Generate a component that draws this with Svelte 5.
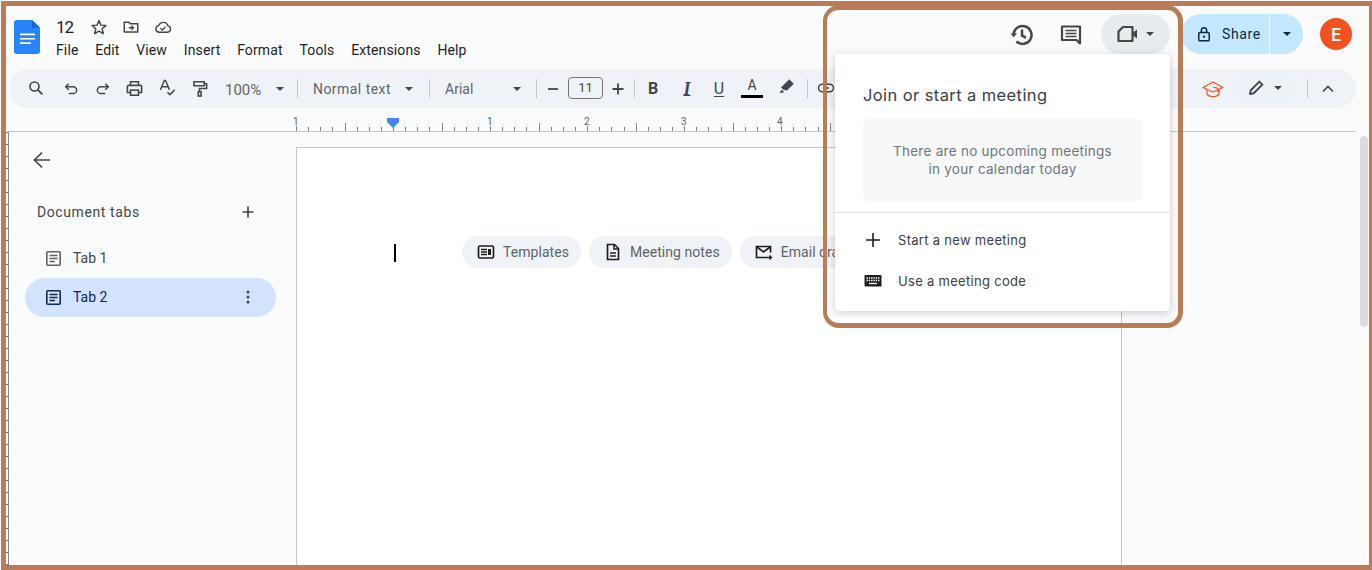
<script>
  const menus = ['File','Edit','View','Insert','Format','Tools','Extensions','Help'];
  const hTicks = Array.from({length: 70}, (_, i) => i);
  const vTicks = Array.from({length: 60}, (_, i) => i);
</script>

<div class="app">
  <header class="top">
    <svg class="logo" width="26" height="34" viewBox="0 0 26 35" preserveAspectRatio="none"><path d="M3 0h15l8 8v24a3 3 0 0 1-3 3H3a3 3 0 0 1-3-3V3a3 3 0 0 1 3-3z" fill="#2684fc"/><path d="M18 0l8 8h-8z" fill="#1a66d6"/><path d="M6 14h15v1.600H6zM6 18.500h15v1.600H6zM6 23h11v1.600H6z" fill="#fff"/></svg>
    <div class="titles">
      <div class="titlerow">
        <span class="docname">12</span>
        <svg class="ic" width="18" height="18" viewBox="0 0 24 24"><path d="M12 3.500l2.600 6 6.500.6-4.900 4.300 1.500 6.400L12 17.400l-5.700 3.400 1.500-6.400-4.900-4.300 6.500-.6z" fill="none" stroke="#444746" stroke-width="2" stroke-linejoin="round"/></svg>
        <svg class="ic folder" width="18" height="18" viewBox="0 0 24 24"><path d="M3 5.500h6l2 2.200h10v11H3z" fill="none" stroke="#444746" stroke-width="2" stroke-linejoin="round"/><path d="M9 13h6M12.500 10.300l2.700 2.700-2.700 2.700" fill="none" stroke="#444746" stroke-width="1.800"/></svg>
        <svg class="ic" width="20" height="18" viewBox="0 0 24 24"><path d="M7 19a4.600 4.600 0 0 1-.8-9.100A6.500 6.500 0 0 1 18.500 10.500a4.300 4.300 0 0 1-.3 8.500z" fill="none" stroke="#444746" stroke-width="1.800"/><path d="M8.500 13.500l2.500 2.500 4.500-4.500" fill="none" stroke="#444746" stroke-width="1.800"/></svg>
      </div>
      <nav class="menus">
        {#each menus as m}<span>{m}</span>{/each}
      </nav>
    </div>
    <div class="actions">
      <svg class="hist" width="26" height="26" viewBox="0 0 24 24"><path d="M4.200 12a8.300 8.300 0 1 1 2.600 6" fill="none" stroke="#444746" stroke-width="2.300"/><path d="M1.300 10.500h6l-3 3.500z" fill="#444746"/><path d="M12 7v5.400l3.600 2.200" fill="none" stroke="#444746" stroke-width="2.300"/></svg>
      <svg class="cmt" width="24" height="24" viewBox="0 0 24 24"><path d="M3 3.500h18v17l-3.500-3.500H3z" fill="none" stroke="#444746" stroke-width="2.200" stroke-linejoin="round"/><path d="M6.500 7.500h11M6.500 10.500h11M6.500 13.500h11" stroke="#444746" stroke-width="1.700"/></svg>
      <div class="meet">
        <svg width="24" height="24" viewBox="0 0 24 24"><path d="M8 5h9.500v14H3.500V9.500z" fill="none" stroke="#444746" stroke-width="2.200" stroke-linejoin="round"/><path d="M18 10.500L22 7.500v9l-4-3z" fill="#444746"/></svg>
        <i class="caret"></i>
      </div>
      <div class="share">
        <div class="sharemain">
          <svg width="18" height="18" viewBox="0 0 24 24"><rect x="5" y="10" width="14" height="11" rx="1.500" fill="none" stroke="#0b2a46" stroke-width="2"/><path d="M8.500 10V7a3.500 3.500 0 0 1 7 0v3" fill="none" stroke="#0b2a46" stroke-width="2"/><circle cx="12" cy="15.500" r="1.500" fill="#0b2a46"/></svg>
          <span>Share</span>
        </div>
        <div class="sharedrop"><i class="caret dark"></i></div>
      </div>
      <div class="avatar">E</div>
    </div>
  </header>

  <div class="toolbar">
    <svg class="tb first" width="18" height="18" viewBox="0 0 24 24"><circle cx="10" cy="10" r="6" fill="none" stroke="#444746" stroke-width="2.200"/><path d="M14.500 14.500l6 6" stroke="#444746" stroke-width="2.400"/></svg>
    <svg class="tb undo" width="18" height="18" viewBox="0 0 24 24"><path d="M5 9h10a4.500 4.500 0 0 1 0 9H9" fill="none" stroke="#444746" stroke-width="2"/><path d="M9 5L5 9l4 4" fill="none" stroke="#444746" stroke-width="2"/></svg>
    <svg class="tb redo" width="18" height="18" viewBox="0 0 24 24"><path d="M19 9H9a4.500 4.500 0 0 0 0 9h6" fill="none" stroke="#444746" stroke-width="2"/><path d="M15 5l4 4-4 4" fill="none" stroke="#444746" stroke-width="2"/></svg>
    <svg class="tb print" width="19" height="19" viewBox="0 0 24 24"><path d="M7 8V3.500h10V8M7 17H3V9.500a1.500 1.500 0 0 1 1.500-1.500h15A1.500 1.500 0 0 1 21 9.500V17h-4" fill="none" stroke="#444746" stroke-width="2"/><rect x="7" y="14" width="10" height="6.500" fill="none" stroke="#444746" stroke-width="2"/></svg>
    <svg class="tb spell" width="19" height="19" viewBox="0 0 24 24"><path d="M3 15L8 3h1.500l5 12M5 11h7.500" fill="none" stroke="#444746" stroke-width="1.800"/><path d="M12 18l3 3 6-6" fill="none" stroke="#444746" stroke-width="1.800"/></svg>
    <svg class="tb paint" width="19" height="19" viewBox="0 0 24 24"><path d="M5 3.500h13v5H5zM18 6h3v6h-9v3" fill="none" stroke="#444746" stroke-width="2"/><rect x="10.500" y="16" width="3.500" height="5.500" fill="none" stroke="#444746" stroke-width="2"/></svg>
    <span class="zoomv">100%</span><i class="caret c1"></i>
    <b class="sep s1"></b>
    <span class="style">Normal text</span><i class="caret c2"></i>
    <b class="sep s2"></b>
    <span class="font">Arial</span><i class="caret c3"></i>
    <b class="sep s3"></b>
    <svg class="tb minus" width="12" height="12" viewBox="0 0 12 12"><path d="M1 6h10" stroke="#444746" stroke-width="1.800"/></svg>
    <span class="fsize">11</span>
    <svg class="tb plus" width="12" height="12" viewBox="0 0 12 12"><path d="M0.500 6h11M6 .5v11" stroke="#444746" stroke-width="1.800"/></svg>
    <b class="sep s4"></b>
    <span class="fmt bold">B</span>
    <span class="fmt ital">I</span>
    <span class="fmt und">U</span>
    <span class="fmt col">A</span>
    <svg class="tb hl" width="18" height="18" viewBox="0 0 24 24"><path d="M15 3l6 6-9 9-5-1-2-2-1-1z" fill="#444746"/><path d="M2 21l3-4 3 3-1.500 1z" fill="#444746"/></svg>
    <b class="sep s5"></b>
    <svg class="tb link" width="18" height="18" viewBox="0 0 24 24"><path d="M11 7H7a5 5 0 0 0 0 10h4M13 7h4a5 5 0 0 1 0 10h-4M8 12h8" fill="none" stroke="#444746" stroke-width="2"/></svg>
    <svg class="cap" width="24" height="24" viewBox="0 0 24 24"><path d="M12 5L2 10.500 12 15l10-4.500z" fill="none" stroke="#f4511e" stroke-width="1.200" stroke-linejoin="round"/><path d="M6 13v4.500c3 3 9 3 12 0V13M12 10l5 1.500V15" fill="none" stroke="#f4511e" stroke-width="1.200"/></svg>
    <div class="editmode">
      <svg width="18" height="18" viewBox="0 0 24 24"><path d="M4 20l1-5L16.500 3.500l4 4L9 19z" fill="none" stroke="#444746" stroke-width="2.600" stroke-linejoin="round"/></svg>
      <i class="caret"></i>
    </div>
    <b class="sep s6"></b>
    <svg class="chev" width="16" height="16" viewBox="0 0 16 16"><path d="M3 10.500L8 5.500l5 5" fill="none" stroke="#444746" stroke-width="1.700"/></svg>
  </div>

  <div class="hruler">
    {#each hTicks as i}
      <i class="tick" class:mid={i % 8 === 4} class:inch={i % 8 === 0} style="left:{296 + i * 12.13}px"></i>
    {/each}
    <b class="hl-num n1">1</b><b class="hl-num n2">1</b><b class="hl-num n3">2</b><b class="hl-num n4">3</b><b class="hl-num n5">4</b>
    <div class="marker"></div>
    <div class="rulerline"></div>
  </div>

  <div class="main">
    <div class="vruler">
      {#each vTicks as i}<i style="top:{i * 12}px"></i>{/each}
    </div>
    <aside class="side">
      <svg class="back" width="20" height="20" viewBox="0 0 20 20"><path d="M18 10H3M10 2.500L2.500 10l7.500 7.500" fill="none" stroke="#444746" stroke-width="1.700"/></svg>
      <div class="dochead"><span>Document tabs</span>
        <svg width="12" height="12" viewBox="0 0 12 12"><path d="M0.500 6h11M6 .5v11" stroke="#444746" stroke-width="1.700"/></svg>
      </div>
      <div class="tabrow">
        <svg width="15" height="15" viewBox="0 0 15 15"><rect x=".8" y=".8" width="13.400" height="13.400" rx="1" fill="none" stroke="#5f6368" stroke-width="1.600"/><path d="M3.500 4.500h8M3.500 7.500h8M3.500 10.500h5.500" stroke="#5f6368" stroke-width="1.300"/></svg>
        <span>Tab 1</span>
      </div>
      <div class="tabrow active">
        <svg width="15" height="15" viewBox="0 0 15 15"><rect x=".8" y=".8" width="13.400" height="13.400" rx="1" fill="none" stroke="#0b2a5c" stroke-width="1.600"/><path d="M3.500 4.500h8M3.500 7.500h8M3.500 10.500h5.500" stroke="#0b2a5c" stroke-width="1.300"/></svg>
        <span>Tab 2</span>
        <svg class="dots" width="4" height="14" viewBox="0 0 4 14"><circle cx="2" cy="2" r="1.500" fill="#444746"/><circle cx="2" cy="7" r="1.500" fill="#444746"/><circle cx="2" cy="12" r="1.500" fill="#444746"/></svg>
      </div>
    </aside>
    <section class="page">
      <div class="cursor"></div>
      <div class="chips">
        <div class="chip">
          <svg width="18" height="18" viewBox="0 0 18 18"><rect x="1.500" y="3" width="15" height="12" rx="1.500" fill="none" stroke="#1f1f1f" stroke-width="1.700"/><path d="M4 6.500h6M4 9h6M4 11.500h6" stroke="#1f1f1f" stroke-width="1.300"/><rect x="11" y="6" width="3" height="6" fill="#1f1f1f"/></svg>
          <span>Templates</span>
        </div>
        <div class="chip">
          <svg width="18" height="18" viewBox="0 0 18 18"><path d="M3.500 1.500h7l4 4v11h-11z" fill="none" stroke="#1f1f1f" stroke-width="1.700"/><path d="M10 1.500v4.500h4.500M6 10h6M6 13h6" fill="none" stroke="#1f1f1f" stroke-width="1.500"/></svg>
          <span>Meeting notes</span>
        </div>
        <div class="chip">
          <svg width="18" height="18" viewBox="0 0 18 18"><path d="M11 14.500H1.500v-11h14v6" fill="none" stroke="#1f1f1f" stroke-width="1.700"/><path d="M2 4l6.500 5L15 4" fill="none" stroke="#1f1f1f" stroke-width="1.700"/><path d="M11 14.500h5.500M14.500 12.500l2 2-2 2" fill="none" stroke="#1f1f1f" stroke-width="1.300"/></svg>
          <span>Email draft</span>
        </div>
      </div>
    </section>
    <div class="gutter"><div class="scrollthumb"></div></div>
  </div>

  <div class="popover">
    <h2>Join or start a meeting</h2>
    <div class="empty">There are no upcoming meetings<br />in your calendar today</div>
    <hr />
    <div class="item">
      <svg width="20" height="20" viewBox="0 0 20 20"><path d="M3 10h14M10 3v14" stroke="#1f1f1f" stroke-width="1.600"/></svg>
      <span>Start a new meeting</span>
    </div>
    <div class="item">
      <svg width="20" height="20" viewBox="0 0 20 20"><rect x="1.500" y="4" width="17" height="11.500" rx="1" fill="#1f1f1f"/><path d="M3.500 7h13M3.500 9.500h13" stroke="#fff" stroke-width="1.300" stroke-dasharray="1.400 .9"/><path d="M6 12.500h8" stroke="#fff" stroke-width="1.300"/></svg>
      <span>Use a meeting code</span>
    </div>
  </div>

  <div class="frame"></div>
  <div class="callout"></div>
</div>

<style>
  :global(body) { margin: 0; }
  .app {
    position: relative;
    width: 1372px;
    height: 570px;
    overflow: hidden;
    background: #f9fbfd;
    font-family: Roboto, "Liberation Sans", sans-serif;
    color: #1f1f1f;
  }
  i, b { display: block; }

  .top { display: flex; height: 69px; box-sizing: border-box; padding: 20px 0 0 14px; }
  .logo { flex: none; }
  .titles { margin-left: 16px; margin-top: -4px; }
  .titlerow { display: flex; align-items: center; height: 22px; }
  .docname { font-size: 17px; letter-spacing: -1px; width: 34px; }
  .ic { margin-right: 14px; }
  .folder { margin-right: 13px; }
  .menus { display: flex; gap: 16.800px; margin-top: 2px; font-size: 14px; letter-spacing: .12px; line-height: 20px; color: #1f1f1f; }
  .actions { margin-left: auto; display: flex; align-items: flex-start; margin-top: -6px; }
  .hist { margin-top: 8px; margin-right: 24px; }
  .cmt { margin-top: 9px; margin-right: 18px; }
  .meet { width: 69px; height: 40px; margin-right: 11px; border-radius: 20px; background: #e9ecef; display: flex; align-items: center; justify-content: center; gap: 7px; padding-right: 3px; box-sizing: border-box; }
  .caret { width: 0; height: 0; border-left: 4.500px solid transparent; border-right: 4.500px solid transparent; border-top: 4.500px solid #444746; }
  .caret.dark { border-top-color: #0b2a46; }
  .share { display: flex; height: 40px; width: 122px; margin-right: 17px; border-radius: 20px; overflow: hidden; background: #c2e7ff; }
  .sharemain { width: 89px; box-sizing: border-box; padding-left: 14px; display: flex; align-items: center; gap: 9px; font-size: 14px; color: #0b2a46; letter-spacing: .6px; border-right: 1px solid #fff; }
  .sharedrop { flex: 1; display: flex; align-items: center; justify-content: center; }
  .avatar { width: 32px; height: 32px; margin-top: 4px; margin-right: 20px; border-radius: 50%; background: #f4511e; color: #fff; font-size: 18px; font-weight: 500; display: flex; align-items: center; justify-content: center; }

  .toolbar { position: relative; margin: 0 16px 0 9px; height: 39px; border-radius: 20px; background: #eff3f8; font-size: 14px; color: #444746; }
  .toolbar > * { position: absolute; }
  .tb { top: 10px; }
  .first { left: 18px; }
  .undo { left: 53px; top: 11px; }
  .redo { left: 85px; top: 11px; }
  .print { left: 116px; }
  .spell { left: 149px; top: 9px; }
  .paint { left: 181px; top: 10px; }
  .zoomv { left: 216px; top: 12px; font-size: 15px; color: #5f6368; }
  .c1 { left: 267px; top: 18px; }
  .c2 { left: 396px; top: 18px; }
  .c3 { left: 504px; top: 18px; }
  .sep { width: 1px; height: 19px; top: 10px; background: #c7c7c7; }
  .s1 { left: 288px; } .s2 { left: 420px; } .s3 { left: 527px; } .s4 { left: 625px; } .s5 { left: 798px; }
  .style { left: 304px; top: 12px; font-size: 14px; letter-spacing: .45px; color: #5f6368; }
  .font { left: 436px; top: 12px; font-size: 14px; color: #5f6368; }
  .minus { left: 538px; top: 14px; }
  .fsize { left: 559px; top: 8px; width: 35px; height: 22px; box-sizing: border-box; border: 1px solid #747775; border-radius: 4px; text-align: center; line-height: 20px; font-size: 13px; color: #444746; }
  .plus { left: 603px; top: 14px; }
  .fmt { top: 11px; width: 20px; text-align: center; font-size: 16px; line-height: 18px; color: #444746; }
  .bold { left: 634px; font-weight: 700; }
  .ital { left: 668px; font-family: "Liberation Serif", serif; font-style: italic; font-weight: 700; font-size: 18px; text-decoration: underline; text-decoration-thickness: 1px; text-underline-offset: 0; }
  .und { left: 700px; text-decoration: underline; text-underline-offset: 2px; }
  .col { left: 732px; width: 22px; height: 20px; top: 9px; box-sizing: border-box; border-bottom: 3px solid #000; line-height: 15px; font-size: 14px; }
  .hl { left: 769px; top: 8px; }
  .link { left: 808px; }
  .cap { right: 131px; top: 8px; }
  .editmode { right: 60px; top: 4px; width: 64px; height: 30px; border-radius: 15px; background: #edf1f8; display: flex; align-items: center; justify-content: center; gap: 9px; }
  .s6 { right: 48px; left: auto; }
  .chev { right: 20px; top: 12px; }

  .hruler { position: relative; height: 23px; }
  .tick { position: absolute; bottom: 0; width: 1px; height: 4px; background: #80868b; }
  .tick.mid { height: 8px; }
  .tick.inch { height: 5px; }
  .rulerline { position: absolute; left: 392px; right: 540px; bottom: -1px; height: 1px; background: #70757a; }
  .hl-num { position: absolute; top: 9px; font-size: 10px; font-weight: 400; color: #5f6368; line-height: 10px; }
  .n1 { left: 293px; } .n2 { left: 487px; } .n3 { left: 584px; } .n4 { left: 681px; } .n5 { left: 777px; }
  .marker { position: absolute; left: 387px; top: 10px; width: 12px; height: 4px; background: #4285f4; }
  .marker::after { content: ""; position: absolute; left: 0; top: 4px; border-left: 6px solid transparent; border-right: 6px solid transparent; border-top: 6px solid #4285f4; }

  .main { display: flex; height: 438px; border-top: 1px solid #c7c7c7; margin-left: 8px; margin-right: 16px; position: relative; }
  .vruler { position: absolute; left: -8px; top: 0; bottom: 0; width: 9px; border-right: 1px solid #80868b; box-sizing: border-box; }
  .vruler i { position: absolute; right: 0; width: 3px; height: 1px; background: #70757a; }
  .side { width: 288px; flex: none; box-sizing: border-box; padding: 18px 20px 0 18px; }
  .back { display: block; margin-left: 6px; }
  .dochead { display: flex; align-items: center; justify-content: space-between; width: 217px; margin-top: 32px; padding: 0 0 0 11px; font-size: 14px; letter-spacing: .6px; color: #444746; height: 20px; }
  .tabrow { display: flex; align-items: center; gap: 12px; width: 251px; height: 39px; box-sizing: border-box; padding: 0 21px 1px; margin-left: -1px; border-radius: 20px; font-size: 14px; color: #444746; }
  .dochead + .tabrow { margin-top: 17px; }
  .tabrow.active { background: #d3e3fd; color: #0b2a5c; }
  .dots { margin-left: auto; margin-right: 5px; }
  .page { position: relative; flex: none; width: 826px; margin-top: 15px; height: 500px; box-sizing: border-box; background: #fff; border: 1px solid #c7c7c7; border-bottom: 0; }
  .cursor { position: absolute; left: 97px; top: 96px; width: 2px; height: 18px; background: #000; }
  .chips { position: absolute; left: 165px; top: 88px; display: flex; gap: 8px; }
  .chip { display: flex; align-items: center; gap: 8px; height: 32px; padding: 0 12px 0 15px; border-radius: 16px; background: #eff3f8; font-size: 14px; letter-spacing: .05px; color: #5f6368; white-space: nowrap; }
  .gutter { position: relative; flex: 1; }
  .scrollthumb { position: absolute; right: -12px; top: 4px; width: 8px; height: 191px; border-radius: 4px; background: #dadce0; }

  .popover { position: absolute; left: 835px; top: 54px; width: 335px; height: 257px; box-sizing: border-box; background: #fff; border-radius: 4px; box-shadow: 0 2px 8px rgba(60,64,67,.25); padding-top: 30px; font-family: Inter, "Open Sans", sans-serif; }
  .popover h2 { margin: 0 0 0 28px; font-weight: 400; font-size: 16.500px; letter-spacing: .4px; line-height: 22px; color: #3c4043; }
  .empty { margin: 12px 28px 0; height: 84px; box-sizing: border-box; padding-top: 24px; border-radius: 8px; background: #f6f8fa; text-align: center; font-size: 13.500px; letter-spacing: .27px; line-height: 18px; color: #70757a; }
  .popover hr { margin: 10px 0 0; border: 0; border-top: 1px solid #e0e0e0; }
  .item { display: flex; align-items: center; gap: 15px; height: 41px; padding-left: 28px; font-size: 13px; letter-spacing: .3px; color: #3c4043; }
  .popover hr + .item { margin-top: 6px; }

  .frame { position: absolute; left: 1px; top: 1px; right: 0; bottom: 0; border-style: solid; border-color: #b97c56; border-width: 5px 3px 5px 5px; pointer-events: none; }
  .callout { position: absolute; left: 823px; top: 5px; width: 360px; height: 323px; box-sizing: border-box; border: 5px solid #b97c56; border-left-width: 4px; border-radius: 16px; pointer-events: none; }
</style>
